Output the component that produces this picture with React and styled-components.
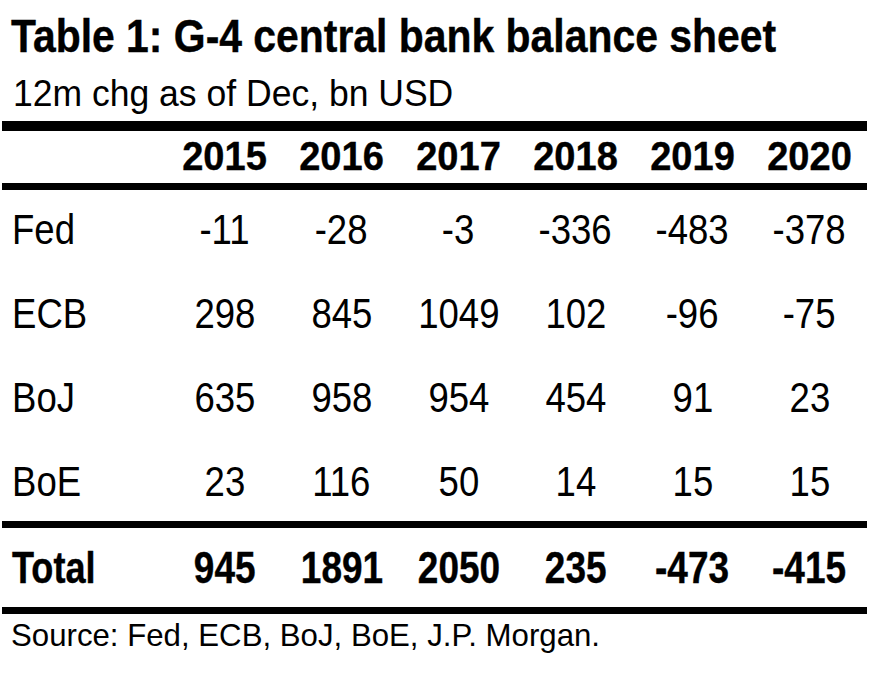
import React from "react";
import styled, { createGlobalStyle } from "styled-components";

const GlobalStyle = createGlobalStyle`
  html, body {
    margin: 0;
    padding: 0;
    background: #ffffff;
  }
  body {
    font-family: "Liberation Sans", Arial, sans-serif;
    color: #000000;
  }
`;

const Page = styled.div`
  width: 865px;
  padding: 0 4px 0 2px;
`;

const Squeeze = styled.span`
  display: inline-block;
  white-space: nowrap;
  transform: scaleX(${(p) => p.$x});
  transform-origin: ${(p) => p.$origin || "center"};
`;

const Title = styled.h1`
  margin: 0;
  padding: 8px 0 0 9px;
  font-size: 47px;
  line-height: 56px;
  font-weight: 700;
  -webkit-text-stroke: 0.4px #000000;
`;

const Subtitle = styled.div`
  margin-top: 8px;
  padding-left: 11px;
  font-size: 37px;
  line-height: 44px;
  font-weight: 400;
`;

const Rule = styled.div`
  height: ${(p) => p.$h}px;
  margin-top: ${(p) => p.$mt || 0}px;
  background: #000000;
`;

const Row = styled.div`
  display: grid;
  grid-template-columns: 164px repeat(6, 117px);
  align-items: start;
  font-size: ${(p) => p.$size}px;
  line-height: ${(p) => p.$lh}px;
  font-weight: ${(p) => (p.$bold ? 700 : 400)};
  -webkit-text-stroke: ${(p) => (p.$bold ? "0.4px #000000" : "0")};
  padding-top: ${(p) => p.$pt || 0}px;
  padding-bottom: ${(p) => p.$pb || 0}px;
`;

const Body = styled.div`
  display: flex;
  flex-direction: column;
  gap: 6px;
  padding-bottom: 1px;
`;

const Label = styled.div`
  padding-left: 10px;
  text-align: left;
`;

const Cell = styled.div`
  text-align: center;
`;

const Source = styled.div`
  padding: 1px 0 0 9px;
  font-size: 32px;
  line-height: 40px;
`;

const years = ["2015", "2016", "2017", "2018", "2019", "2020"];

const rows = [
  { label: "Fed", values: ["-11", "-28", "-3", "-336", "-483", "-378"] },
  { label: "ECB", values: ["298", "845", "1049", "102", "-96", "-75"] },
  { label: "BoJ", values: ["635", "958", "954", "454", "91", "23"] },
  { label: "BoE", values: ["23", "116", "50", "14", "15", "15"] },
];

const total = { label: "Total", values: ["945", "1891", "2050", "235", "-473", "-415"] };

export default function App() {
  return (
    <>
      <GlobalStyle />
      <Page>
        <Title>
          <Squeeze $x={0.87} $origin="left">
            Table 1: G-4 central bank balance sheet
          </Squeeze>
        </Title>
        <Subtitle>
          <Squeeze $x={0.96} $origin="left">
            12m chg as of Dec, bn USD
          </Squeeze>
        </Subtitle>
        <Rule $h={10} $mt={5} />
        <Row $size={40} $lh={50} $bold $pt={0} $pb={2}>
          <Label />
          {years.map((y) => (
            <Cell key={y}>
              <Squeeze $x={0.95}>{y}</Squeeze>
            </Cell>
          ))}
        </Row>
        <Rule $h={7} />
        <Body>
          {rows.map((r) => (
            <Row key={r.label} $size={43} $lh={78}>
              <Label>
                <Squeeze $x={0.85} $origin="left">
                  {r.label}
                </Squeeze>
              </Label>
              {r.values.map((v, i) => (
                <Cell key={i}>
                  <Squeeze $x={0.85}>{v}</Squeeze>
                </Cell>
              ))}
            </Row>
          ))}
        </Body>
        <Rule $h={7} />
        <Row $size={44} $lh={79} $bold>
          <Label>
            <Squeeze $x={0.82} $origin="left">
              {total.label}
            </Squeeze>
          </Label>
          {total.values.map((v, i) => (
            <Cell key={i}>
              <Squeeze $x={0.84}>{v}</Squeeze>
            </Cell>
          ))}
        </Row>
        <Rule $h={7} />
        <Source>
          <Squeeze $x={0.975} $origin="left">
            Source: Fed, ECB, BoJ, BoE, J.P. Morgan.
          </Squeeze>
        </Source>
      </Page>
    </>
  );
}
